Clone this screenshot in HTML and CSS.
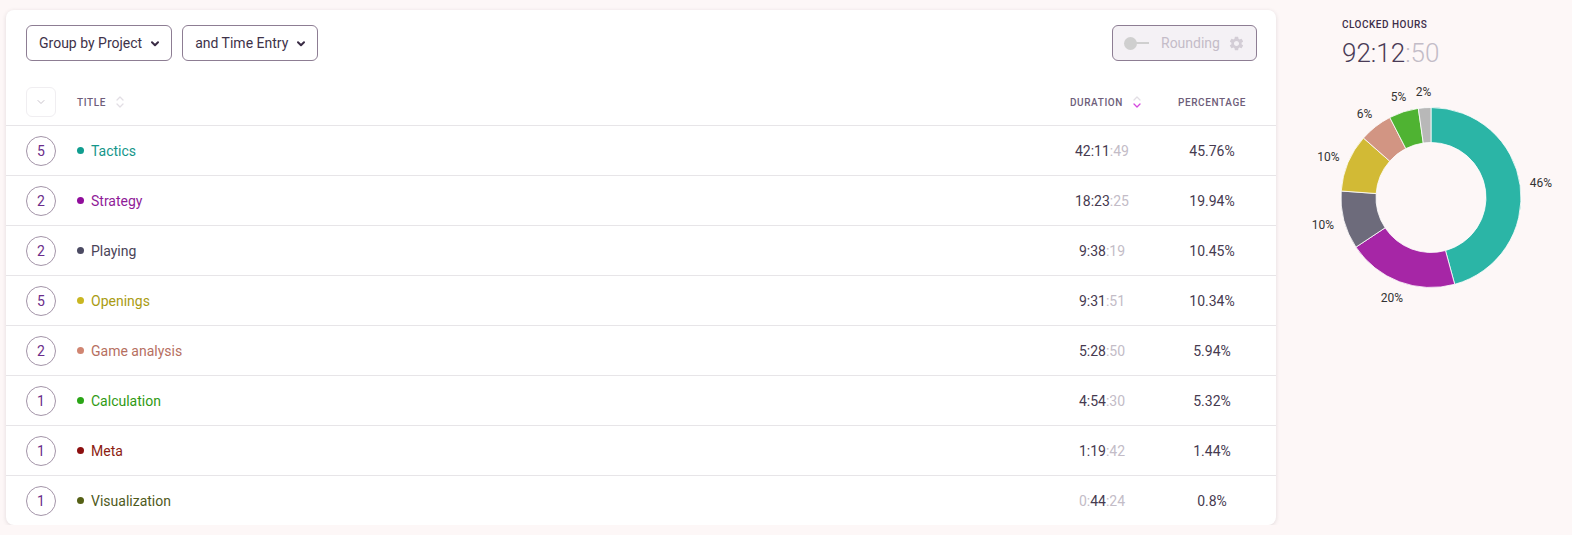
FILE: index.html
```html
<!DOCTYPE html>
<html lang="en">
<head>
<meta charset="utf-8">
<title>Report</title>
<link rel="stylesheet" href="styles.css">
</head>
<body>
<div class="layout">
  <div class="card">
    <div class="toolbar">
      <button class="select">Group by Project
        <svg class="chev" width="8" height="6" viewBox="0 0 8 6"><path d="M1 1.2 L4 4.2 L7 1.2" fill="none" stroke="#3a2c45" stroke-width="2" stroke-linecap="round" stroke-linejoin="round"/></svg>
      </button>
      <button class="select">and Time Entry
        <svg class="chev" width="8" height="6" viewBox="0 0 8 6"><path d="M1 1.2 L4 4.2 L7 1.2" fill="none" stroke="#3a2c45" stroke-width="2" stroke-linecap="round" stroke-linejoin="round"/></svg>
      </button>
      <button class="rounding">
        <span class="toggle"><span class="knob"></span><span class="track"></span></span>
        <span class="rounding-label">Rounding</span>
        <svg class="gear" width="17" height="17" viewBox="0 0 24 24"><path fill="#d3cdd6" d="M19.14 12.94c.04-.3.06-.61.06-.94 0-.32-.02-.64-.07-.94l2.030-1.58a.49.49 0 0 0 .12-.61l-1.92-3.32a.488.488 0 0 0-.59-.22l-2.39.96c-.5-.38-1.03-.7-1.62-.94l-.36-2.54a.484.484 0 0 0-.48-.41h-3.84c-.24 0-.43.17-.47.41l-.36 2.54c-.59.24-1.13.57-1.62.94l-2.39-.96c-.22-.08-.47 0-.59.22L2.74 8.87c-.12.21-.08.47.12.61l2.03 1.58c-.05.3-.09.63-.09.94s.02.64.07.94l-2.03 1.58a.49.49 0 0 0-.12.61l1.92 3.32c.12.22.37.29.59.22l2.39-.96c.5.38 1.03.7 1.62.94l.36 2.54c.05.24.24.41.48.41h3.84c.24 0 .44-.17.47-.41l.36-2.54c.59-.24 1.13-.56 1.620-.94l2.39.96c.22.08.47 0 .59-.22l1.92-3.32c.12-.22.07-.47-.12-.61l-2.01-1.58zM12 15.6c-1.98 0-3.6-1.62-3.6-3.6s1.62-3.6 3.6-3.6 3.6 1.62 3.6 3.6-1.62 3.6-3.6 3.6z"/></svg>
      </button>
    </div>

    <div class="thead">
      <div class="expand-all">
        <svg width="10" height="6" viewBox="0 0 10 6"><path d="M2 1.5 L5 4.5 L8 1.5" fill="none" stroke="#c8c2cb" stroke-width="1" stroke-linecap="round"/></svg>
      </div>
      <div class="th th-title">Title
        <svg class="sort" width="10" height="14" viewBox="0 0 10 14"><path d="M2 5 L5 2 L8 5" fill="none" stroke="#e2dee4" stroke-width="1.3" stroke-linecap="round" stroke-linejoin="round"/><path d="M2 9 L5 12 L8 9" fill="none" stroke="#e2dee4" stroke-width="1.3" stroke-linecap="round" stroke-linejoin="round"/></svg>
      </div>
      <div class="th th-duration">Duration
        <svg class="sort" width="10" height="14" viewBox="0 0 10 14"><path d="M2 5 L5 2 L8 5" fill="none" stroke="#e2dee4" stroke-width="1.3" stroke-linecap="round" stroke-linejoin="round"/><path d="M2 9 L5 12 L8 9" fill="none" stroke="#d548df" stroke-width="1.3" stroke-linecap="round" stroke-linejoin="round"/></svg>
      </div>
      <div class="th th-perc">Percentage</div>
    </div>

    <div class="row">
      <div class="count">5</div>
      <div class="title c-tactics"><span class="dot"></span>Tactics</div>
      <div class="dur">42:11<span class="sec">:49</span></div>
      <div class="perc">45.76%</div>
    </div>
    <div class="row">
      <div class="count">2</div>
      <div class="title c-strategy"><span class="dot"></span>Strategy</div>
      <div class="dur">18:23<span class="sec">:25</span></div>
      <div class="perc">19.94%</div>
    </div>
    <div class="row">
      <div class="count">2</div>
      <div class="title c-playing"><span class="dot"></span>Playing</div>
      <div class="dur">9:38<span class="sec">:19</span></div>
      <div class="perc">10.45%</div>
    </div>
    <div class="row">
      <div class="count">5</div>
      <div class="title c-openings"><span class="dot"></span>Openings</div>
      <div class="dur">9:31<span class="sec">:51</span></div>
      <div class="perc">10.34%</div>
    </div>
    <div class="row">
      <div class="count">2</div>
      <div class="title c-analysis"><span class="dot"></span>Game analysis</div>
      <div class="dur">5:28<span class="sec">:50</span></div>
      <div class="perc">5.94%</div>
    </div>
    <div class="row">
      <div class="count">1</div>
      <div class="title c-calc"><span class="dot"></span>Calculation</div>
      <div class="dur">4:54<span class="sec">:30</span></div>
      <div class="perc">5.32%</div>
    </div>
    <div class="row">
      <div class="count">1</div>
      <div class="title c-meta"><span class="dot"></span>Meta</div>
      <div class="dur">1:19<span class="sec">:42</span></div>
      <div class="perc">1.44%</div>
    </div>
    <div class="row last">
      <div class="count">1</div>
      <div class="title c-vis"><span class="dot"></span>Visualization</div>
      <div class="dur"><span class="sec">0:</span>44<span class="sec">:24</span></div>
      <div class="perc">0.8%</div>
    </div>
  </div>

  <aside class="summary">
    <div class="summary-head">
      <div class="summary-label">Clocked hours</div>
      <div class="summary-total">92:12<span class="sec">:50</span></div>
    </div>
    <svg class="donut" width="272" height="230" viewBox="0 0 272 230">
      <g stroke="#ffffff" stroke-width="0.8" stroke-linejoin="round">
        <path fill="#2bb5a6" d="M136,27.5 A90,90 0 0 1 159.70,204.32 L150.48,170.56 A55,55 0 0 0 136,62.5 Z"/>
        <path fill="#a626a6" d="M159.70,204.32 A90,90 0 0 1 60.93,167.14 L90.12,147.84 A55,55 0 0 0 150.48,170.56 Z"/>
        <path fill="#6d6b7b" d="M60.93,167.14 A90,90 0 0 1 46.23,111.00 L81.14,113.53 A55,55 0 0 0 90.12,147.84 Z"/>
        <path fill="#d2ba35" d="M46.23,111.00 A90,90 0 0 1 68.45,58.04 L94.72,81.16 A55,55 0 0 0 81.14,113.53 Z"/>
        <path fill="#d29583" d="M68.45,58.04 A90,90 0 0 1 94.79,37.49 L110.82,68.60 A55,55 0 0 0 94.72,81.16 Z"/>
        <path fill="#4fb332" d="M94.79,37.49 A90,90 0 0 1 123.32,28.40 L128.25,63.05 A55,55 0 0 0 110.82,68.60 Z"/>
        <path fill="#b8b8b8" d="M123.32,28.40 A90,90 0 0 1 136,27.5 L136,62.5 A55,55 0 0 0 128.25,63.05 Z"/>
      </g>
      <g class="labels" text-anchor="middle" dominant-baseline="central">
        <text x="246" y="103">46%</text>
        <text x="97" y="217.5">20%</text>
        <text x="28" y="145">10%</text>
        <text x="33.5" y="76.5">10%</text>
        <text x="69.5" y="33.5">6%</text>
        <text x="103.5" y="16.5">5%</text>
        <text x="128.5" y="11.5">2%</text>
      </g>
    </svg>
  </aside>
</div>
</body>
</html>
```

FILE: styles.css
```css
* { box-sizing: border-box; }

html, body {
  margin: 0;
  padding: 0;
  background: #fdf7f7;
  font-family: Roboto, "Noto Sans", "Liberation Sans", sans-serif;
  color: #3e3249;
}

.layout {
  display: flex;
  align-items: flex-start;
  padding: 10px 0 0 6px;
}

.card {
  width: 1270px;
  flex: none;
  background: #ffffff;
  border-radius: 8px;
  box-shadow: 0 1px 4px rgba(60, 40, 60, 0.14);
  overflow: hidden;
}

.toolbar {
  display: flex;
  align-items: center;
  gap: 10px;
  padding: 15px 19px 0 20px;
}

.select {
  display: flex;
  align-items: center;
  gap: 9px;
  height: 36px;
  padding: 0 12px 0 12px;
  background: #fff;
  border: 1px solid #8d7d93;
  border-radius: 6px;
  font-family: inherit;
  font-size: 14px;
  color: #3e3249;
}

.chev { display: block; margin-top: 1px; }

.rounding {
  margin-left: auto;
  display: flex;
  align-items: center;
  height: 36px;
  width: 145px;
  padding: 0 11px 0 11px;
  background: #f4f1f5;
  border: 1px solid #8d7d93;
  border-radius: 6px;
  font-family: inherit;
  font-size: 14px;
  color: #c4bcc8;
}

.toggle {
  display: flex;
  align-items: center;
  width: 26px;
  margin-right: 11px;
}
.knob {
  width: 13px;
  height: 13px;
  border-radius: 50%;
  background: #cfcfcf;
  flex: none;
}
.track {
  width: 13px;
  height: 2px;
  background: #cfcfcf;
  margin-left: -1px;
}
.rounding-label { flex: 1; text-align: left; }
.gear { display: block; }

.thead, .row {
  display: grid;
  grid-template-columns: 30px 1fr 120px 88px;
  align-items: center;
  padding: 0 20px;
}

.thead {
  padding-top: 26px;
  padding-bottom: 8px;
  border-bottom: 1px solid #e7e5e8;
}

.expand-all {
  width: 30px;
  height: 30px;
  border: 1px solid #f0eef1;
  border-radius: 6px;
  display: flex;
  align-items: center;
  justify-content: center;
}

.th {
  font-size: 10px;
  font-weight: 500;
  letter-spacing: 0.6px;
  text-transform: uppercase;
  color: #6e5e7a;
  display: flex;
  align-items: center;
}
.th-title { padding-left: 21px; gap: 9px; }
.th-duration { justify-content: center; gap: 9px; padding-right: 12px; padding-left: 8px; }
.th-perc { justify-content: center; }
.sort { display: block; }

.row {
  height: 50px;
  border-bottom: 1px solid #e7e5e8;
  font-size: 14px;
}
.row.last { border-bottom: none; height: 49px; }

.count {
  width: 30px;
  height: 30px;
  border: 1px solid #a394a8;
  border-radius: 50%;
  display: flex;
  align-items: center;
  justify-content: center;
  color: #6b2d8a;
  font-size: 14px;
}

.title {
  display: flex;
  align-items: center;
  padding-left: 21px;
}
.dot {
  width: 7px;
  height: 7px;
  border-radius: 50%;
  background: currentColor;
  margin-right: 7px;
}

.c-tactics { color: #15968a; }
.c-tactics .dot { background: #109d8f; }
.c-strategy { color: #8f1b98; }
.c-strategy .dot { background: #900d9b; }
.c-playing { color: #4a4458; }
.c-playing .dot { background: #4b4a62; }
.c-openings { color: #a99b12; }
.c-openings .dot { background: #c9b621; }
.c-analysis { color: #b66f5f; }
.c-analysis .dot { background: #d08571; }
.c-calc { color: #2f9a14; }
.c-calc .dot { background: #2aa516; }
.c-meta { color: #8c1c12; }
.c-meta .dot { background: #8c0f0f; }
.c-vis { color: #4f5a1c; }
.c-vis .dot { background: #556015; }

.dur {
  text-align: center;
  padding-right: 12px;
  color: #463a50;
}
.sec { color: #c3bcc7; }

.perc {
  text-align: center;
  color: #463a50;
}

.summary {
  width: 296px;
  flex: none;
}
.summary-head { padding-left: 66px; }
.summary-label {
  margin-top: 8px;
  font-size: 10px;
  line-height: 14px;
  font-weight: 500;
  letter-spacing: 0.5px;
  text-transform: uppercase;
  color: #3d2e4a;
}
.summary-total {
  margin-top: 6px;
  font-size: 26px;
  line-height: 30px;
  font-weight: 300;
  color: #4a3b56;
}
.donut {
  display: block;
  margin: 12px 0 0 19px;
}
.labels text {
  font-family: Roboto, "Liberation Sans", sans-serif;
  font-size: 12px;
  fill: #333333;
}
```
